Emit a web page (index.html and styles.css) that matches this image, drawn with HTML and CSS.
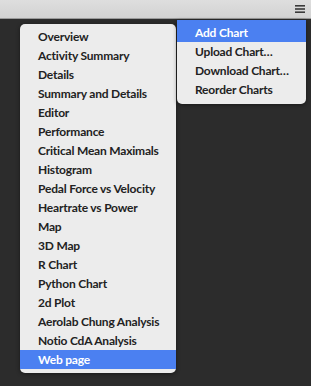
FILE: index.html
```html
<!DOCTYPE html>
<html>
<head>
<meta charset="utf-8">
<link rel="stylesheet" href="styles.css">
</head>
<body>
<div class="toolbar">
  <svg class="hamburger" width="10" height="10" viewBox="0 0 10 10">
    <rect x="0" y="1" width="10" height="1.6" fill="#3a3a3a"/>
    <rect x="0" y="4.2" width="10" height="1.6" fill="#3a3a3a"/>
    <rect x="0" y="7.4" width="10" height="1.6" fill="#3a3a3a"/>
  </svg>
</div>
<div class="canvas">
  <ul class="menu chart-menu">
    <li>Overview</li>
    <li>Activity Summary</li>
    <li>Details</li>
    <li>Summary and Details</li>
    <li>Editor</li>
    <li>Performance</li>
    <li>Critical Mean Maximals</li>
    <li>Histogram</li>
    <li>Pedal Force vs Velocity</li>
    <li>Heartrate vs Power</li>
    <li>Map</li>
    <li>3D Map</li>
    <li>R Chart</li>
    <li>Python Chart</li>
    <li>2d Plot</li>
    <li>Aerolab Chung Analysis</li>
    <li>Notio CdA Analysis</li>
    <li class="active">Web page</li>
  </ul>
  <ul class="menu main-menu">
    <li class="active first">Add Chart</li>
    <li>Upload Chart…</li>
    <li>Download Chart…</li>
    <li>Reorder Charts</li>
  </ul>
</div>
</body>
</html>
```
FILE: styles.css
```css
html, body {
  margin: 0;
  padding: 0;
  height: 100%;
  background: #2c2c2c;
  font-family: Lato, "Noto Sans", sans-serif;
}
.toolbar {
  height: 19px;
  background: linear-gradient(#dedede, #d2d2d2);
  border-bottom: 1px solid #9a9a9a;
  box-sizing: border-box;
  display: flex;
  justify-content: flex-end;
  align-items: center;
  padding-right: 6px;
}
.hamburger {
  display: block;
}
.canvas {
  position: relative;
  height: calc(100% - 19px);
}
.menu {
  list-style: none;
  margin: 0;
  background: #ececec;
  position: absolute;
  box-shadow: 0 1px 4px rgba(0,0,0,0.45);
}
.menu li {
  height: 19px;
  line-height: 19px;
  padding-left: 18px;
  font-size: 12px;
  font-weight: 700;
  letter-spacing: -0.2px;
  color: #222;
  white-space: nowrap;
}
.menu li.active {
  background: #4b80f1;
  color: #fff;
}
.menu li.first {
  padding-top: 3px;
}
.chart-menu {
  left: 20px;
  top: 5px;
  width: 156px;
  padding: 3px 0 4px;
  border-radius: 5px;
}
.main-menu {
  left: 177px;
  top: 1px;
  width: 129px;
  padding: 0 0 5px;
  border-radius: 0 0 5px 5px;
}
```
